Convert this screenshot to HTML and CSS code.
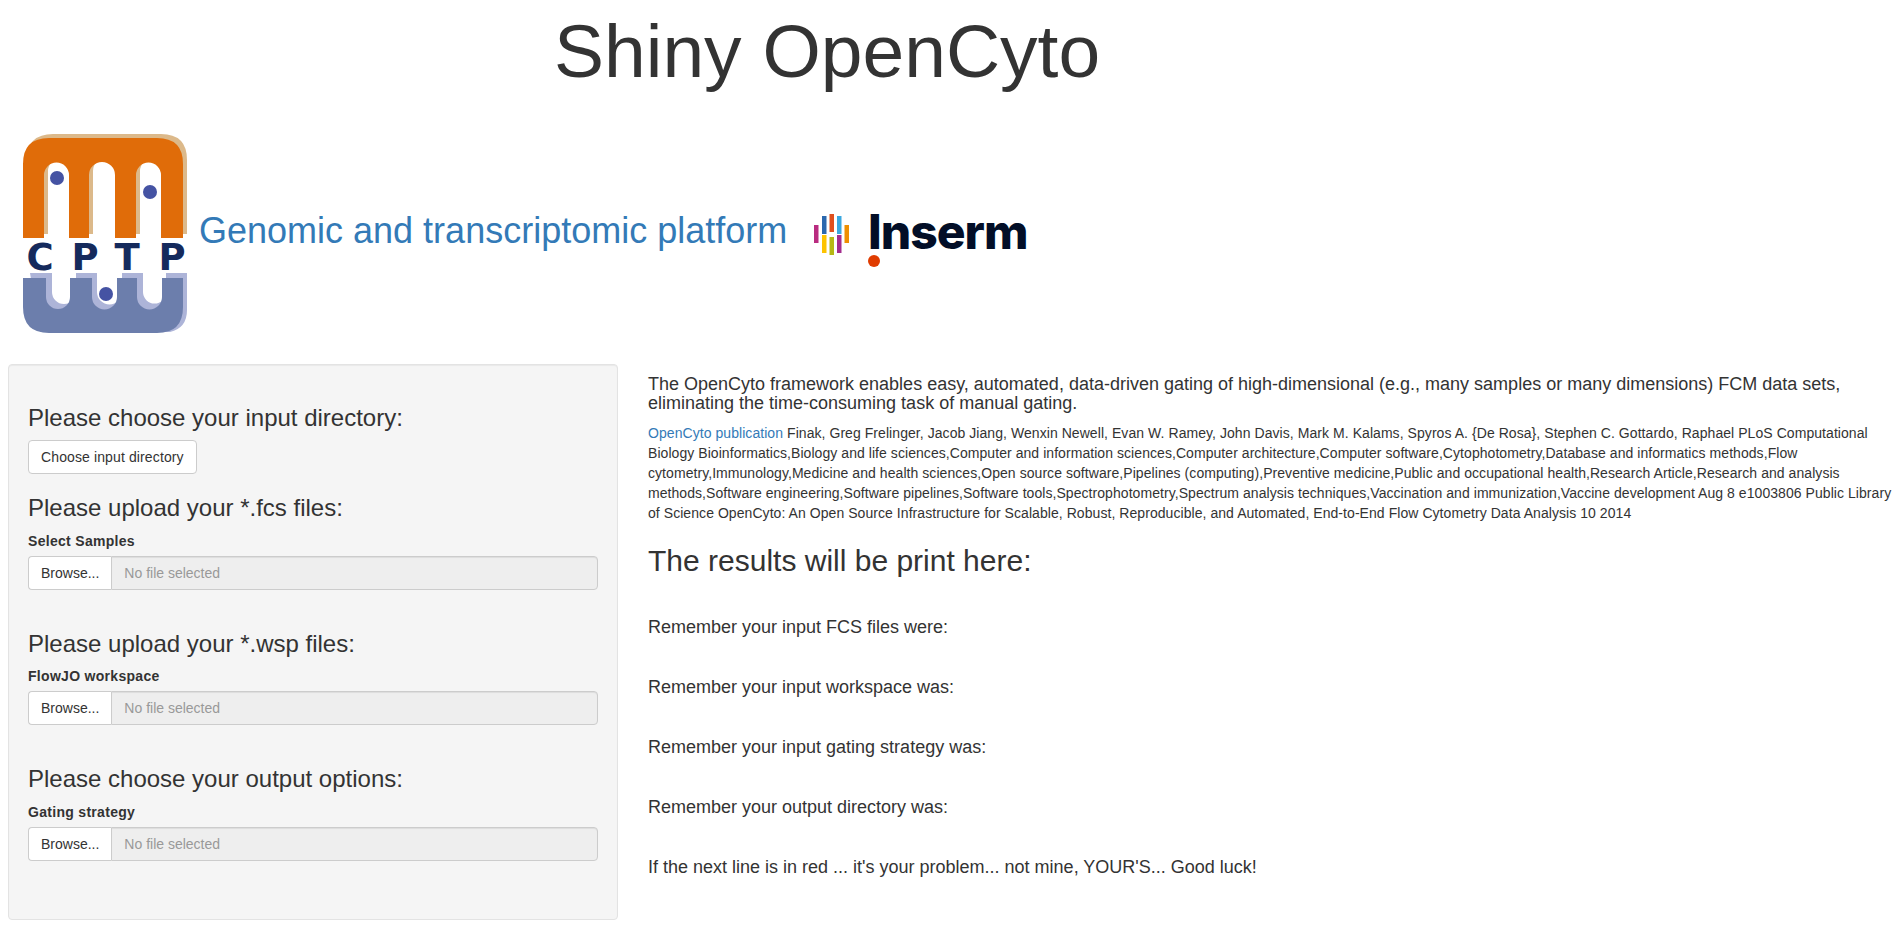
FILE: index.html
```html
<!DOCTYPE html>
<html lang="en">
<head>
<meta charset="utf-8">
<title>Shiny OpenCyto</title>
<link rel="stylesheet" href="styles.css">
</head>
<body>
<h1 class="title">Shiny OpenCyto</h1>
<div class="banner">
  <svg class="cptp" viewBox="0 15 190 215" width="190" height="215" role="img" aria-label="CPTP logo">
    <path class="tan" transform="translate(4 -4)" d="M23 128V54Q23 28 49 28H157Q183 28 183 54V128H161V65a12.5 12.5 0 0 0-25 0V128H115V65a13 13 0 0 0-26 0V128H69V65a12.5 12.5 0 0 0-25 0V128Z"/>
    <path class="orange" d="M23 128V54Q23 28 49 28H157Q183 28 183 54V128H161V65a12.5 12.5 0 0 0-25 0V128H115V65a13 13 0 0 0-26 0V128H69V65a12.5 12.5 0 0 0-25 0V128Z"/>
    <path class="lilac" d="M30 163H52V182a12 12 0 0 0 24 0V163H97V182a12.5 12.5 0 0 0 25 0V163H143V182a11.5 11.5 0 0 0 23 0V163H187V200Q187 218 170 222H40Z"/>
    <path class="slate" d="M23 168H46V187a12 12 0 0 0 24 0V168H92V187a12.5 12.5 0 0 0 25 0V168H137V187a12.5 12.5 0 0 0 25 0V168H183V197Q183 223 157 223H49Q23 223 23 197Z"/>
    <circle class="dot" cx="57" cy="68" r="7"/>
    <circle class="dot" cx="150" cy="82" r="7"/>
    <circle class="dot" cx="106" cy="184" r="7"/>
    <text class="cptp-letter" x="40" y="160">C</text>
    <text class="cptp-letter" x="85" y="160">P</text>
    <text class="cptp-letter" x="127" y="160">T</text>
    <text class="cptp-letter" x="172" y="160">P</text>
  </svg>
  <a class="platform" href="#">Genomic and transcriptomic platform</a>
  <svg class="inserm" viewBox="810 195 230 85" width="230" height="85" role="img" aria-label="Inserm logo">
    <rect x="814" y="225" width="4.5" height="18" fill="#b92b80"/>
    <rect x="822" y="216" width="4.5" height="18" fill="#2b68ae"/>
    <rect x="829.5" y="214" width="4.5" height="18" fill="#e0501e"/>
    <rect x="837" y="216" width="4.5" height="18" fill="#3aa8e0"/>
    <rect x="844.5" y="225" width="4.5" height="18" fill="#ef8f00"/>
    <rect x="822" y="235" width="4.5" height="18" fill="#fdc300"/>
    <rect x="829.5" y="237" width="4.5" height="18" fill="#b5b815"/>
    <rect x="837" y="235" width="4.5" height="18" fill="#a32c8e"/>
    <text class="inserm-word" x="868" y="249">Inserm</text>
    <circle cx="874" cy="261" r="6" fill="#e03c00"/>
  </svg>
</div>
<div class="layout">
  <aside class="well">
    <h3>Please choose your input directory:</h3>
    <button class="btn btn-choose" type="button">Choose input directory</button>
    <h3>Please upload your *.fcs files:</h3>
    <div class="form-group">
      <label>Select Samples</label>
      <div class="input-group"><span class="btn browse">Browse...</span><span class="file-name">No file selected</span></div>
    </div>
    <h3>Please upload your *.wsp files:</h3>
    <div class="form-group">
      <label>FlowJO workspace</label>
      <div class="input-group"><span class="btn browse">Browse...</span><span class="file-name">No file selected</span></div>
    </div>
    <h3>Please choose your output options:</h3>
    <div class="form-group">
      <label>Gating strategy</label>
      <div class="input-group"><span class="btn browse">Browse...</span><span class="file-name">No file selected</span></div>
    </div>
  </aside>
  <main class="main">
    <h4 class="intro">The OpenCyto framework enables easy, automated, data-driven gating of high-dimensional (e.g., many samples or many dimensions) FCM data sets, eliminating the time-consuming task of manual gating.</h4>
    <p class="citation"><a href="#">OpenCyto publication</a> <span>Finak, Greg Frelinger, Jacob Jiang, Wenxin Newell, Evan W. Ramey, John Davis, Mark M. Kalams, Spyros A. {De Rosa}, Stephen C. Gottardo, Raphael PLoS Computational Biology Bioinformatics,Biology and life sciences,Computer and information sciences,Computer architecture,Computer software,Cytophotometry,Database and informatics methods,Flow cytometry,Immunology,Medicine and health sciences,Open source software,Pipelines (computing),Preventive medicine,Public and occupational health,Research Article,Research and analysis methods,Software engineering,Software pipelines,Software tools,Spectrophotometry,Spectrum analysis techniques,Vaccination and immunization,Vaccine development Aug 8 e1003806 Public Library of Science OpenCyto: An Open Source Infrastructure for Scalable, Robust, Reproducible, and Automated, End-to-End Flow Cytometry Data Analysis 10 2014</span></p>
    <h2>The results will be print here:</h2>
    <h4 class="note">Remember your input FCS files were:</h4>
    <h4 class="note">Remember your input workspace was:</h4>
    <h4 class="note">Remember your input gating strategy was:</h4>
    <h4 class="note">Remember your output directory was:</h4>
    <h4 class="note">If the next line is in red ... it's your problem... not mine, YOUR'S... Good luck!</h4>
  </main>
</div>
</body>
</html>
```
FILE: styles.css
```css
* { box-sizing: border-box; }
html, body { height: 100%; }
body {
  margin: 0;
  overflow: hidden;
  background: #fff;
  color: #333;
  font-family: "Liberation Sans", Arial, sans-serif;
  font-size: 14px;
  line-height: 1.42857;
}
a { color: #337ab7; text-decoration: none; }
h1, h2, h3, h4 { font-weight: 500; line-height: 1.1; color: inherit; }

.title {
  margin: 10px 0 0;
  padding-left: 554px;
  font-size: 75px;
  font-weight: 400;
}

.banner {
  display: flex;
  align-items: center;
  margin-top: 32px;
  height: 215px;
}
.cptp { flex: none; }
.platform { margin-left: 9px; margin-top: -2px; font-size: 36px; line-height: 1.1; white-space: nowrap; }
.inserm { flex: none; margin-left: 23px; margin-top: 11px; }
.tan { fill: #dcb98a; }
.orange { fill: #e06c09; }
.lilac { fill: #adb4d8; }
.slate { fill: #6c7eac; }
.dot { fill: #4553a3; }
.cptp-letter {
  fill: #152a5c;
  font-family: "DejaVu Sans", sans-serif;
  font-weight: 700;
  font-size: 37px;
  text-anchor: middle;
}
.inserm-word {
  fill: #020e27;
  font-family: Inter, sans-serif;
  font-weight: 800;
  font-size: 48px;
  letter-spacing: -1px;
}

.layout {
  display: flex;
  gap: 30px;
  margin-top: 24.5px;
  padding: 0 7px 0 8px;
  align-items: flex-start;
}
.well {
  flex: none;
  width: 610px;
  padding: 0 19px 17px;
  background: #f5f5f5;
  border: 1px solid #e3e3e3;
  border-radius: 4px;
  box-shadow: inset 0 1px 1px rgba(0, 0, 0, .05);
}
.well h3 { margin: 21px 0 9px; font-size: 24px; }
.well h3:first-child { margin-top: 40px; }
.btn {
  display: inline-block;
  padding: 7px 12px 5px;
  font: inherit;
  color: #333;
  background: #fff;
  border: 1px solid #ccc;
  border-radius: 4px;
  white-space: nowrap;
}
.btn-choose { letter-spacing: .12px; }
.form-group { margin-bottom: 41px; }
.form-group label { display: block; margin-bottom: 5px; font-weight: 700; font-size: 14px; letter-spacing: .3px; line-height: 20px; }
.input-group { display: flex; height: 34px; }
.browse { flex: none; border-radius: 4px 0 0 4px; border-right: 0; }
.file-name {
  flex: 1;
  padding: 7px 12px 5px;
  color: #999;
  background: #eee;
  border: 1px solid #ccc;
  border-radius: 0 4px 4px 0;
  box-shadow: inset 0 1px 1px rgba(0, 0, 0, .075);
}

.main { flex: 1; min-width: 0; padding-top: 10.5px; }
.intro { margin: 0 0 10px; font-size: 18px; }
.citation { margin: 0; letter-spacing: .06px; }
.main h2 { margin: 20px 0 41px; font-size: 30px; }
.note { margin: 0 0 40.2px; font-size: 18px; }
```
